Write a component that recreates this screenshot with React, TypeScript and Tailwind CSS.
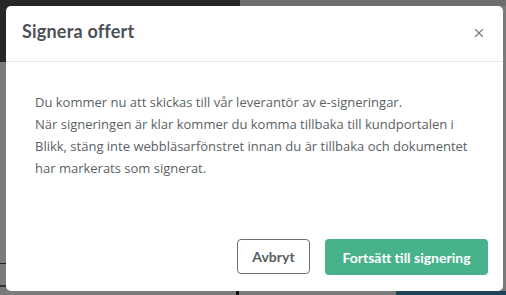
import { X } from "lucide-react";

const App = () => {
  return (
    <div
      className="relative w-[506px] h-[295px] overflow-hidden bg-[#7b7b7b]"
      style={{ fontFamily: "Lato, 'Open Sans', sans-serif" }}
    >
      {/* dimmed page behind */}
      <div className="absolute left-0 top-0 w-[240px] h-[62px] bg-[#272727]" />
      <div className="absolute left-[240px] top-0 w-[266px] h-[6px] bg-[#6e6e6e]" />
      <div className="absolute left-0 top-[263px] w-[8px] h-[1px] bg-[#222]" />
      <div className="absolute left-0 top-[285px] w-[240px] h-[2px] bg-[#333]" />
      <div className="absolute left-[236px] top-[291px] w-[3px] h-[4px] bg-[#111]" />
      <div className="absolute left-[396px] top-[291px] w-[110px] h-[4px] bg-[#1d4558]" />

      {/* modal */}
      <div className="absolute left-[6px] top-[6px] w-[497px] h-[285px] bg-white rounded-[5px] flex flex-col">
        <div className="h-[56px] flex items-center justify-between pl-[16px] pr-[17px] pb-[4px] border-b border-[#e6e6e6]">
          <h2 className="text-[18px] font-bold text-[#4b5157] tracking-[0.2px]">Signera offert</h2>
          <X size={14} strokeWidth={2} className="text-[#777] mt-[3px]" />
        </div>
        <div
          className="flex-1 pl-[29px] pr-[30px] pt-[29px] text-[13px] leading-[22px] text-[#5a5f65]"
          style={{ fontFamily: "'Open Sans', sans-serif" }}
        >
          <p>Du kommer nu att skickas till vår leverantör av e-signeringar.</p>
          <p>
            När signeringen är klar kommer du komma tillbaka till kundportalen i Blikk, stäng inte
            webbläsarfönstret innan du är tillbaka och dokumentet har markerats som signerat.
          </p>
        </div>
        <div className="flex justify-end gap-[15px] pr-[15px] pb-[16px]">
          <button className="w-[73px] h-[35px] rounded-[4px] border border-[#6b7078] text-[14px] font-bold text-[#585d63]">
            Avbryt
          </button>
          <button className="w-[163px] h-[36px] rounded-[4px] bg-[#48b38b] text-[14px] font-bold text-white">
            Fortsätt till signering
          </button>
        </div>
      </div>
    </div>
  );
};

export default App;
